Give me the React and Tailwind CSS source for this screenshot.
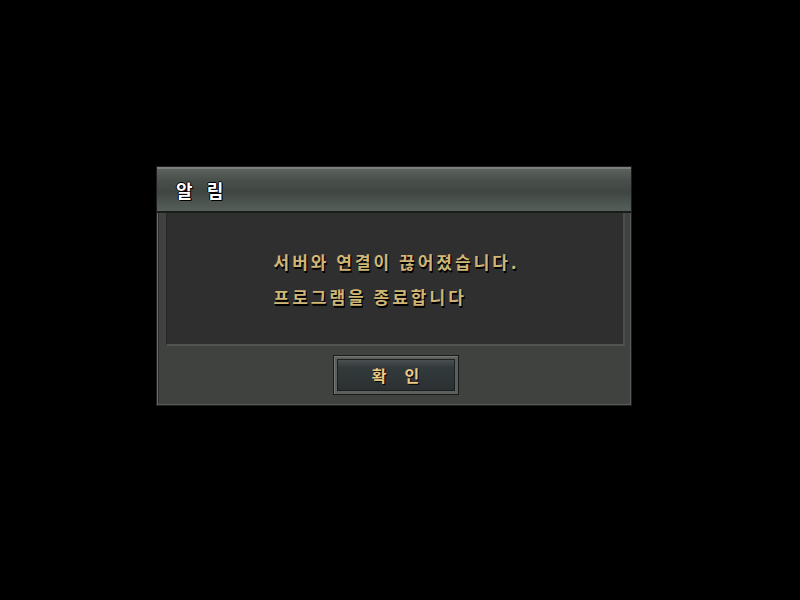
export default function App() {
  return (
    <div className="w-[800px] h-[600px] bg-black pt-[166px] pl-[156px] font-['Noto_Sans_CJK_KR',sans-serif]">
      <div className="w-[476px] h-[240px] flex flex-col border border-[#1c1d1c] bg-[#404240] shadow-[inset_1px_1px_0_#6a6e6a,inset_-1px_-1px_0_#585c58,inset_2px_2px_0_#2c2e2c]">
        {/* Title bar */}
        <div className="h-[46px] shrink-0 flex items-center pl-[19px] bg-[linear-gradient(180deg,#5c625e_0%,#4a514c_25%,#3f4642_55%,#4d5550_80%,#565e59_100%)] border-t-2 border-[#7a7f7a] border-b-2 border-b-[#1a1c1a]">
          <span className="text-[18px] font-bold text-white tracking-[5px] [text-shadow:1px_1px_0_#000,-1px_0_0_#000,0_-1px_0_#000,1px_0_0_#000]">
            알 림
          </span>
        </div>

        {/* Body */}
        <div className="flex-1 flex flex-col pl-[9px] pr-[6px]">
          <div className="h-[133px] flex items-center justify-center bg-[#2f2f2f] border-l border-[#262626] border-r-2 border-r-[#4c4e4c] border-b-2 border-b-[#525452]">
            <div className="flex flex-col gap-[12px] text-[17px] font-bold text-[#cfb676] leading-[23px] tracking-[3px] [text-shadow:1px_1px_0_#000,1px_2px_0_#000] pl-[3px]">
              <span>서버와 연결이 끊어졌습니다.</span>
              <span>프로그램을 종료합니다</span>
            </div>
          </div>

          {/* Footer */}
          <div className="flex-1 flex justify-center pt-[9px]">
            <div className="w-[126px] h-[40px] border border-[#1a1c1c] bg-[#5c605c] p-[3px] shadow-[inset_1px_1px_0_#737873]">
              <button className="w-full h-full flex items-center justify-center bg-[linear-gradient(180deg,#4a5052_0%,#333a3c_25%,#2b3133_100%)] border border-[#1c2022] text-[16px] font-bold text-[#ecc984] tracking-[18px] pl-[18px] [text-shadow:1px_1px_0_#000]">
                확인
              </button>
            </div>
          </div>
        </div>
      </div>
    </div>
  );
}
